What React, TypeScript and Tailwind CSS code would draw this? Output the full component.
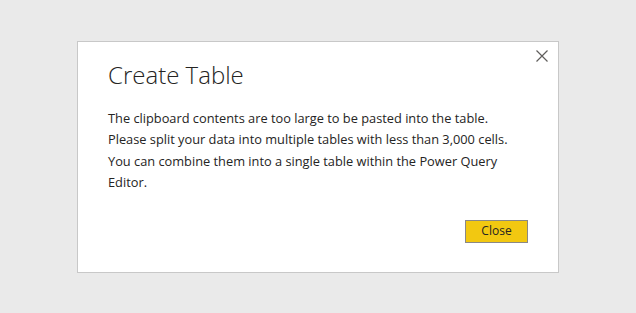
import React from 'react';

export default function App() {
  return (
    <div
      className="flex h-[313px] w-full items-center justify-center bg-[#eaeaea]"
      style={{ fontFamily: '"Segoe UI", "Open Sans", "Noto Sans", sans-serif' }}
    >
      <div className="relative flex h-[232px] w-[482px] flex-col border border-[#c8c8c8] bg-white pl-[30px] pr-[24px] pt-[16px]">
        <button
          type="button"
          aria-label="Close"
          className="absolute right-[10px] top-[8px] flex h-[13px] w-[13px] items-center justify-center"
        >
          <svg width="12" height="12" viewBox="0 0 12 12" fill="none" stroke="#605e5c" strokeWidth="1.2">
            <path d="M0.5 0.5 L11.5 11.5 M11.5 0.5 L0.5 11.5" />
          </svg>
        </button>
        <h1 className="text-[24px] font-light leading-[34px] text-[#252423]">Create Table</h1>
        <p className="mt-[16px] text-[12.8px] leading-[21.5px] text-[#252423]">
          The clipboard contents are too large to be pasted into the table.
          <br />
          Please split your data into multiple tables with less than 3,000 cells.
          <br />
          You can combine them into a single table within the Power Query
          <br />
          Editor.
        </p>
        <div className="mt-auto mb-[29px] flex justify-end pr-[6px]">
          <button
            type="button"
            className="h-[23px] w-[63px] border border-[#8a8886] bg-[#f2c811] text-[12px] leading-none text-[#252423]"
          >
            Close
          </button>
        </div>
      </div>
    </div>
  );
}
